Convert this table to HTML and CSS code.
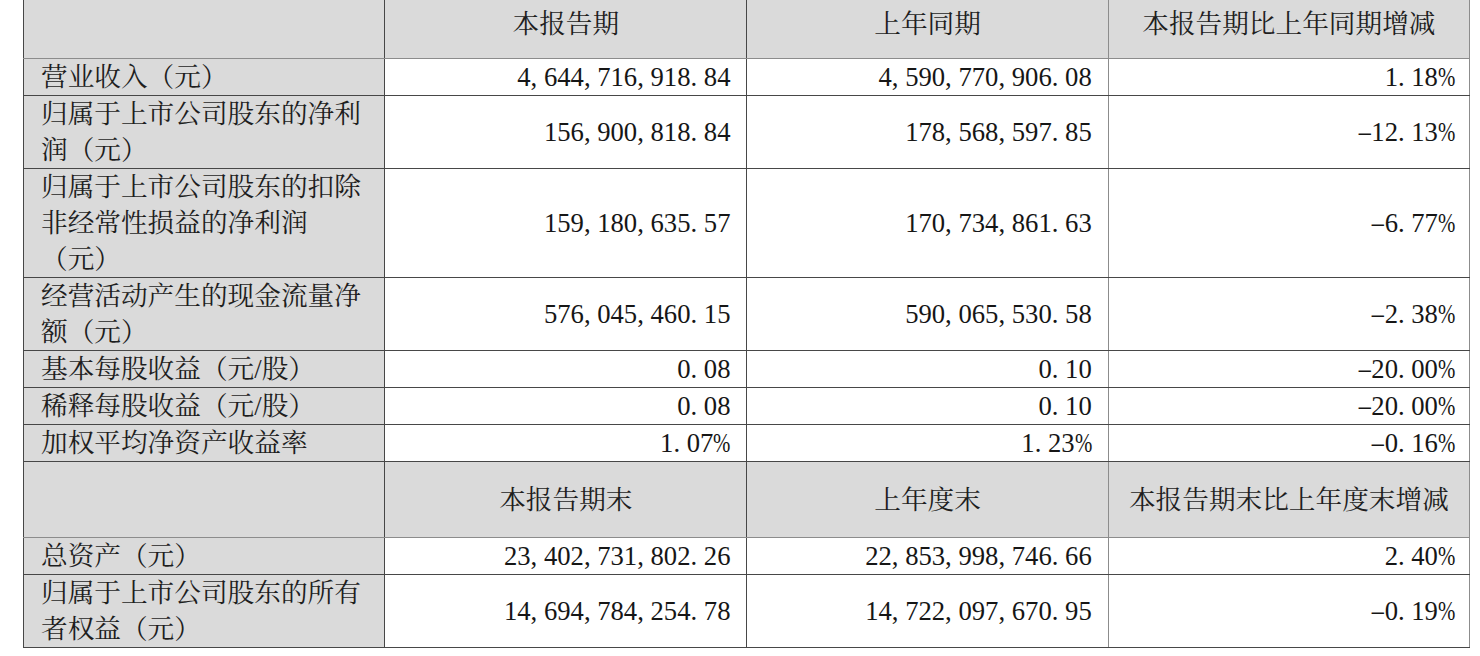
FILE: index.html
```html
<!DOCTYPE html>
<html lang="zh-CN">
<head>
<meta charset="utf-8">
<title>主要会计数据</title>
<link rel="stylesheet" href="styles.css">
</head>
<body>
<table class="fin">
  <colgroup><col class="c1"><col class="c2"><col class="c3"><col class="c4"></colgroup>
  <tr class="head h1">
    <td class="lbl"></td><td class="ctr">本报告期</td><td class="ctr g">上年同期</td><td class="ctr">本报告期比上年同期增减</td>
  </tr>
  <tr>
    <td class="lbl">营业收入（元）</td>
    <td class="num">4<span class="p">,</span>644<span class="p">,</span>716<span class="p">,</span>918<span class="p">.</span>84</td>
    <td class="num g">4<span class="p">,</span>590<span class="p">,</span>770<span class="p">,</span>906<span class="p">.</span>08</td>
    <td class="num pct">1<span class="p">.</span>18<span class="pc">%</span></td>
  </tr>
  <tr>
    <td class="lbl">归属于上市公司股东的净利润（元）</td>
    <td class="num">156<span class="p">,</span>900<span class="p">,</span>818<span class="p">.</span>84</td>
    <td class="num g">178<span class="p">,</span>568<span class="p">,</span>597<span class="p">.</span>85</td>
    <td class="num pct"><span class="neg">-</span>12<span class="p">.</span>13<span class="pc">%</span></td>
  </tr>
  <tr>
    <td class="lbl">归属于上市公司股东的扣除非经常性损益的净利润（元）</td>
    <td class="num">159<span class="p">,</span>180<span class="p">,</span>635<span class="p">.</span>57</td>
    <td class="num g">170<span class="p">,</span>734<span class="p">,</span>861<span class="p">.</span>63</td>
    <td class="num pct"><span class="neg">-</span>6<span class="p">.</span>77<span class="pc">%</span></td>
  </tr>
  <tr>
    <td class="lbl">经营活动产生的现金流量净额（元）</td>
    <td class="num">576<span class="p">,</span>045<span class="p">,</span>460<span class="p">.</span>15</td>
    <td class="num g">590<span class="p">,</span>065<span class="p">,</span>530<span class="p">.</span>58</td>
    <td class="num pct"><span class="neg">-</span>2<span class="p">.</span>38<span class="pc">%</span></td>
  </tr>
  <tr>
    <td class="lbl">基本每股收益（元/股）</td>
    <td class="num">0<span class="p">.</span>08</td>
    <td class="num g">0<span class="p">.</span>10</td>
    <td class="num pct"><span class="neg">-</span>20<span class="p">.</span>00<span class="pc">%</span></td>
  </tr>
  <tr>
    <td class="lbl">稀释每股收益（元/股）</td>
    <td class="num">0<span class="p">.</span>08</td>
    <td class="num g">0<span class="p">.</span>10</td>
    <td class="num pct"><span class="neg">-</span>20<span class="p">.</span>00<span class="pc">%</span></td>
  </tr>
  <tr>
    <td class="lbl">加权平均净资产收益率</td>
    <td class="num">1<span class="p">.</span>07<span class="pc">%</span></td>
    <td class="num g">1<span class="p">.</span>23<span class="pc">%</span></td>
    <td class="num pct"><span class="neg">-</span>0<span class="p">.</span>16<span class="pc">%</span></td>
  </tr>
  <tr class="head h2">
    <td class="lbl"></td><td class="ctr">本报告期末</td><td class="ctr g">上年度末</td><td class="ctr">本报告期末比上年度末增减</td>
  </tr>
  <tr>
    <td class="lbl">总资产（元）</td>
    <td class="num">23<span class="p">,</span>402<span class="p">,</span>731<span class="p">,</span>802<span class="p">.</span>26</td>
    <td class="num g">22<span class="p">,</span>853<span class="p">,</span>998<span class="p">,</span>746<span class="p">.</span>66</td>
    <td class="num pct">2<span class="p">.</span>40<span class="pc">%</span></td>
  </tr>
  <tr>
    <td class="lbl">归属于上市公司股东的所有者权益（元）</td>
    <td class="num">14<span class="p">,</span>694<span class="p">,</span>784<span class="p">,</span>254<span class="p">.</span>78</td>
    <td class="num g">14<span class="p">,</span>722<span class="p">,</span>097<span class="p">,</span>670<span class="p">.</span>95</td>
    <td class="num pct"><span class="neg">-</span>0<span class="p">.</span>19<span class="pc">%</span></td>
  </tr>
</table>
</body>
</html>
```

FILE: styles.css
```css
html, body {
  margin: 0;
  padding: 0;
  background: #ffffff;
}

.fin {
  border-collapse: collapse;
  table-layout: fixed;
  width: 1447px;
  margin: -1px 0 0 23px;
  font-family: "Liberation Serif", "Noto Serif CJK SC", "Noto Sans CJK SC", serif;
  font-size: 26.67px;
  line-height: 36px;
  color: #161616;
}

.c1 { width: 361px; }
.c2 { width: 362px; }
.c3 { width: 361px; }
.c4 { width: 361px; }

.fin td {
  border: 1px solid #474747;
  padding: 0;
  vertical-align: middle;
  background: #ffffff;
}

.fin td.g {
  border-right-color: #8c8c8c;
}

.fin td:last-child {
  border-right-color: #8c8c8c;
}

.fin td.lbl {
  background: #dadada;
  padding: 0 16px 0 17px;
  text-align: left;
  color: #1e1e1e;
}

.head td {
  background: #dadada;
}

.fin .h1 td {
  height: 48px;
  padding-bottom: 10px;
  border-bottom-color: #8c8c8c;
}

.h2 td {
  height: 75px;
  border-bottom-color: #8c8c8c;
}

.fin td.ctr {
  text-align: center;
  color: #1e1e1e;
}

.fin td.num {
  text-align: right;
  padding-right: 16px;
  white-space: nowrap;
}

.fin td.pct {
  padding-right: 14px;
}

.p {
  display: inline-block;
  width: 0.5em;
  text-align: left;
}

.pc {
  display: inline-block;
  width: 0.64em;
  transform: scaleX(0.78);
  transform-origin: left center;
}

.neg {
  display: inline-block;
  width: 0.5em;
  text-align: center;
  transform: scale(1.8, 0.75);
}
```
